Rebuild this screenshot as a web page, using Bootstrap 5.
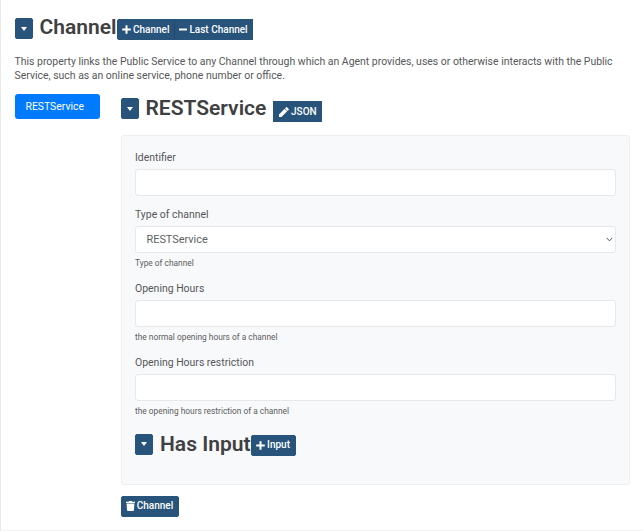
<!DOCTYPE html>
<html lang="en">
<head>
<meta charset="utf-8">
<meta name="viewport" content="width=device-width, initial-scale=1">
<title>Channel</title>
<link href="https://cdn.jsdelivr.net/npm/bootstrap@5.3.0/dist/css/bootstrap.min.css" rel="stylesheet">
<style>
body{font-family:Roboto,"Liberation Sans",sans-serif;font-size:10.46px;line-height:14px;color:#55575a;background:#fff}
.panel{height:531px;border-left:1px solid #e9e9e9;border-bottom:1px solid #f3f3f3;padding:18px 13px 0 13.5px}
.title{font-size:21px;line-height:22px;height:22px;margin:-1px 0 0;font-weight:600;color:#3f4042;white-space:nowrap}
.title-main{width:77.2px;margin-top:-2px}
.btn-navy{--bs-btn-bg:#28547c;--bs-btn-color:#fff;--bs-btn-border-color:#28547c;--bs-btn-hover-bg:#1f4567;--bs-btn-hover-color:#fff;--bs-btn-padding-x:4px;--bs-btn-padding-y:0;--bs-btn-font-size:10px;--bs-btn-font-weight:500;--bs-btn-border-radius:2px;height:21px;display:inline-flex;align-items:center;justify-content:center;gap:2px;white-space:nowrap;line-height:12px}
.toggle{width:18px;flex:none;margin-right:7px}
.toggle::after{content:"";border:3px solid transparent;border-top:4px solid #fff;border-bottom:0}
.actions{margin-top:1px}
.actions .w-last{border-left-color:#234a6e}
.intro{margin:15px 0 11px;height:28px;white-space:nowrap}
.side{width:106px;flex:none}
.side .tab.nav-link{width:85px;height:25px;padding:0 11px;border-radius:3px;background:#007bff;line-height:25px;font-size:10.4px;color:#fff}
.section{width:509.5px}
.service-head{height:25.4px;padding-top:4.4px}
.box{height:350px;margin-top:16px;padding:14px 13.5px 0;background:#f8f9fb;border:1px solid #efefef;border-radius:3px}
.box .form-label{margin:0;height:19px;line-height:15px;display:block}
.box .form-control,.box .form-select{height:27px;padding:0 10.5px;font-size:10.9px;line-height:14px;border:1px solid #e6e8eb;border-radius:3px;color:#5b5f63}
.box .form-select{background-size:7px 7px;background-position:right 2px center}
.field{height:57px}
.field-hint{height:74px}
.box .form-text{margin:3px 0 0;font-size:8.35px;line-height:14px;color:#5b5d60}
.w-ch{width:58px}.w-last{width:79px}.w-json{width:49px;margin:3px 0 0 7px}.w-in{width:45px;margin-top:1px}
.sub{margin-top:4.6px}
.remove{margin-top:10.5px}
</style>
</head>
<body>
<main class="panel">
  <header class="d-flex align-items-start">
    <button class="btn btn-navy toggle" aria-label="Toggle channel"></button>
    <h1 class="title title-main">Channel</h1>
    <div class="btn-group actions">
      <button class="btn btn-navy w-ch flex-grow-0"><svg width="9" height="9" viewBox="0 0 9 9"><path d="M4.500.2v8.600M.2 4.500h8.600" stroke="#fff" stroke-width="2"/></svg>Channel</button>
      <button class="btn btn-navy w-last flex-grow-0 rounded-0"><svg width="9" height="9" viewBox="0 0 9 9"><path d="M0 4.500h9" stroke="#fff" stroke-width="2"/></svg>Last Channel</button>
    </div>
  </header>
  <p class="intro">This property links the Public Service to any Channel through which an Agent provides, uses or otherwise interacts with the Public<br>Service, such as an online service, phone number or office.</p>
  <div class="d-flex align-items-start">
    <nav class="side nav nav-pills"><a class="tab nav-link active" href="#">RESTService</a></nav>
    <section class="section">
      <div class="d-flex service-head align-items-start">
        <button class="btn btn-navy toggle" aria-label="Toggle service"></button>
        <h2 class="title">RESTService</h2>
        <button class="btn btn-navy w-json rounded-0"><svg width="10" height="10" viewBox="0 0 512 512" fill="#fff"><path d="M291 93 419 221 128 512H0V384zM313 71l55-55q20-20 42 0l86 86q20 22 0 42l-55 55z"/></svg>JSON</button>
      </div>
      <form class="box">
        <div class="field"><label class="form-label" for="a">Identifier</label><input class="form-control" id="a"></div>
        <div class="field-hint"><label class="form-label" for="b">Type of channel</label><select class="form-select" id="b"><option>RESTService</option></select><div class="form-text">Type of channel</div></div>
        <div class="field-hint"><label class="form-label" for="c">Opening Hours</label><input class="form-control" id="c"><div class="form-text">the normal opening hours of a channel</div></div>
        <div class="field-hint"><label class="form-label" for="d">Opening Hours restriction</label><input class="form-control" id="d"><div class="form-text">the opening hours restriction of a channel</div></div>
        <div class="d-flex sub align-items-start">
          <button type="button" class="btn btn-navy toggle" aria-label="Toggle input"></button>
          <h3 class="title">Has Input</h3>
          <button type="button" class="btn btn-navy w-in"><svg width="9" height="9" viewBox="0 0 9 9"><path d="M4.500.2v8.600M.2 4.500h8.600" stroke="#fff" stroke-width="2"/></svg>Input</button>
        </div>
      </form>
      <button class="btn btn-navy w-ch remove"><svg width="9" height="10" viewBox="0 0 9 10" fill="#fff"><path d="M0 .8h2.600L3.100 0h2.800l.5.8H9V2H0zM.6 2.600h7.800L8 9q-.1 1-1 1H2Q1.100 10 1 9z"/></svg>Channel</button>
    </section>
  </div>
</main>
<script src="https://cdn.jsdelivr.net/npm/bootstrap@5.3.0/dist/js/bootstrap.bundle.min.js"></script>
</body>
</html>
